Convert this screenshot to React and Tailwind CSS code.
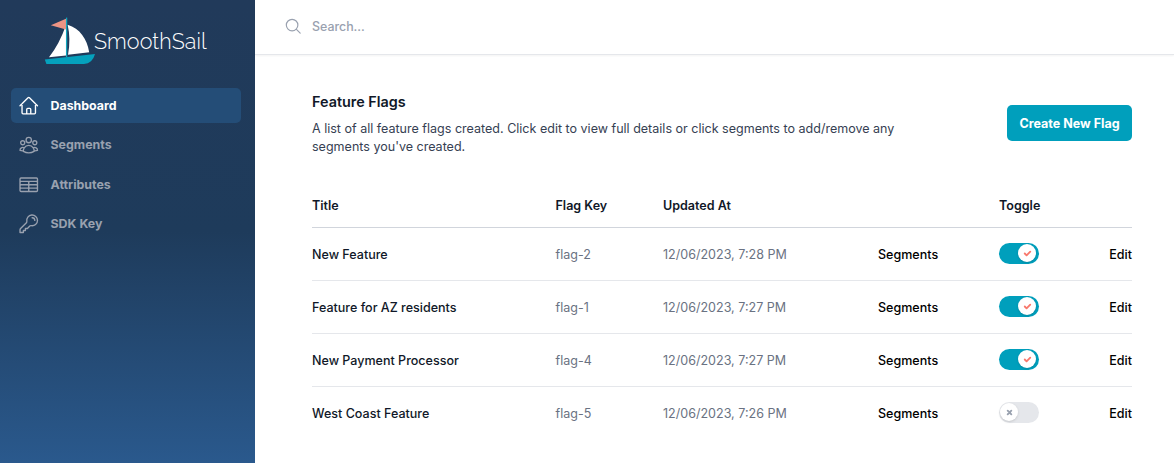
import React from "react";
import {
  HiOutlineHome,
  HiOutlineUserGroup,
  HiOutlineTableCells,
  HiOutlineKey,
  HiOutlineMagnifyingGlass,
} from "react-icons/hi2";

const NAV = [
  { name: "Dashboard", icon: HiOutlineHome, current: true },
  { name: "Segments", icon: HiOutlineUserGroup },
  { name: "Attributes", icon: HiOutlineTableCells },
  { name: "SDK Key", icon: HiOutlineKey },
];

const FLAGS = [
  { title: "New Feature", key: "flag-2", updated: "12/06/2023, 7:28 PM", on: true },
  { title: "Feature for AZ residents", key: "flag-1", updated: "12/06/2023, 7:27 PM", on: true },
  { title: "New Payment Processor", key: "flag-4", updated: "12/06/2023, 7:27 PM", on: true },
  { title: "West Coast Feature", key: "flag-5", updated: "12/06/2023, 7:26 PM", on: false },
];

const COLS = "grid grid-cols-[243.5px_107.5px_215px_121px_1fr] items-center";

function Logo() {
  return (
    <svg width="170" height="52" viewBox="0 0 170 52" aria-label="SmoothSail">
      <path d="M22 13V43.6L5 45.2Q15.5 32 22 13Z" fill="#fff" />
      <path d="M23.6 12.8C36 16.5 43 27 45.2 40.2L24 42.8Q27 27 23.6 12.8Z" fill="#fff" />
      <path d="M22 6.8L6.8 13.2L22 17.6Z" fill="#ed9484" />
      <path d="M22.6 5.6V45" stroke="#11a5bd" strokeWidth="1.3" />
      <path d="M.8 47.6L51 42Q48.5 51.6 40 52H2.4Z" fill="#05a1bd" />
      <text x="50" y="36.5" textLength="112.5" fontSize="21.5" fill="#fff" className="font-['Raleway','Lato',sans-serif] font-light">
        SmoothSail
      </text>
    </svg>
  );
}

function Toggle({ on }) {
  return (
    <button
      type="button"
      role="switch"
      aria-checked={on}
      className={
        on
          ? "mb-0.5 flex h-[21px] w-10 items-center justify-end rounded-full bg-[#009fbc] pr-[3px]"
          : "mb-0.5 flex h-[21px] w-10 items-center rounded-full bg-gray-200 pl-px"
      }
    >
      <span className="flex size-[18px] items-center justify-center rounded-full bg-white shadow-sm">
        {on ? (
          <svg className="size-[11px] text-[#f8786c]" fill="currentColor" viewBox="0 0 12 12">
            <path d="M3.707 5.293a1 1 0 00-1.414 1.414l1.414-1.414zM5 8l-.707.707a1 1 0 001.414 0L5 8zm4.707-3.293a1 1 0 00-1.414-1.414l1.414 1.414zm-7.414 2l2 2 1.414-1.414-2-2-1.414 1.414zm3.414 2l4-4-1.414-1.414-4 4 1.414 1.414z" />
          </svg>
        ) : (
          <svg className="size-[11px] text-gray-400" fill="none" viewBox="0 0 12 12">
            <path d="M4 8l2-2m0 0l2-2M6 6L4 4m2 2l2 2" stroke="currentColor" strokeWidth="2" strokeLinecap="round" strokeLinejoin="round" />
          </svg>
        )}
      </span>
    </button>
  );
}

export default function App() {
  return (
    <div className="flex h-[463px] w-full overflow-hidden bg-white font-['Inter',sans-serif] text-[12.4px] leading-[17.7px]">
      <aside className="flex w-[255px] shrink-0 flex-col bg-linear-to-b from-[#213a5a] from-0% via-[#1e3b5b] via-50% to-[#2a598d] to-100% px-[11px]">
        <div className="flex h-[88px] pt-3 pl-[33px]">
          <Logo />
        </div>
        <nav className="flex flex-col gap-[4.5px]">
          {NAV.map(({ name, icon: Icon, current }) => (
            <a
              key={name}
              className={
                current
                  ? "flex h-[35px] w-[230px] items-center gap-[11px] rounded-[5px] bg-[#244d77] px-[7px] font-bold text-white"
                  : "flex h-[35px] w-[230px] items-center gap-[11px] rounded-[5px] px-[7px] font-bold text-gray-400"
              }
            >
              <Icon className="size-[21.5px]" />
              {name}
            </a>
          ))}
        </nav>
      </aside>
      <div className="flex min-w-0 flex-1 flex-col">
        <header className="flex h-[55px] shrink-0 items-center gap-[9.5px] border-b border-gray-200 pb-px pl-[29px] shadow-xs">
          <HiOutlineMagnifyingGlass className="size-[18.5px] text-gray-400" />
          <span className="font-medium text-gray-400">Search...</span>
        </header>
        <main className="flex flex-col pt-9 pr-[42px] pl-[57px] text-[12.54px]">
          <div className="flex items-start justify-between">
            <div className="w-[600px]">
              <h1 className="text-[14.4px] leading-[21px] font-semibold text-gray-900">Feature Flags</h1>
              <p className="mt-2 text-gray-700">
                A list of all feature flags created. Click edit to view full details or click segments to add/remove any segments you've created.
              </p>
            </div>
            <button className="mt-[14px] h-9 w-[125px] rounded-[5px] bg-[#009fbc] pt-px font-bold text-white">Create New Flag</button>
          </div>
          <div className="mt-7 flex flex-col">
            <div className={COLS + " h-[45px] border-b border-gray-300 font-semibold text-gray-900"}>
              <span>Title</span>
              <span>Flag Key</span>
              <span>Updated At</span>
              <span />
              <span>Toggle</span>
            </div>
            {FLAGS.map((flag) => (
              <div key={flag.key} className={COLS + " h-[53px] border-b border-gray-200 text-gray-500 last:border-transparent"}>
                <span className="font-medium text-gray-900">{flag.title}</span>
                <span>{flag.key}</span>
                <span>{flag.updated}</span>
                <span className="font-medium text-black">Segments</span>
                <div className="flex items-center justify-between">
                  <Toggle on={flag.on} />
                  <span className="font-medium text-black">Edit</span>
                </div>
              </div>
            ))}
          </div>
        </main>
      </div>
    </div>
  );
}
